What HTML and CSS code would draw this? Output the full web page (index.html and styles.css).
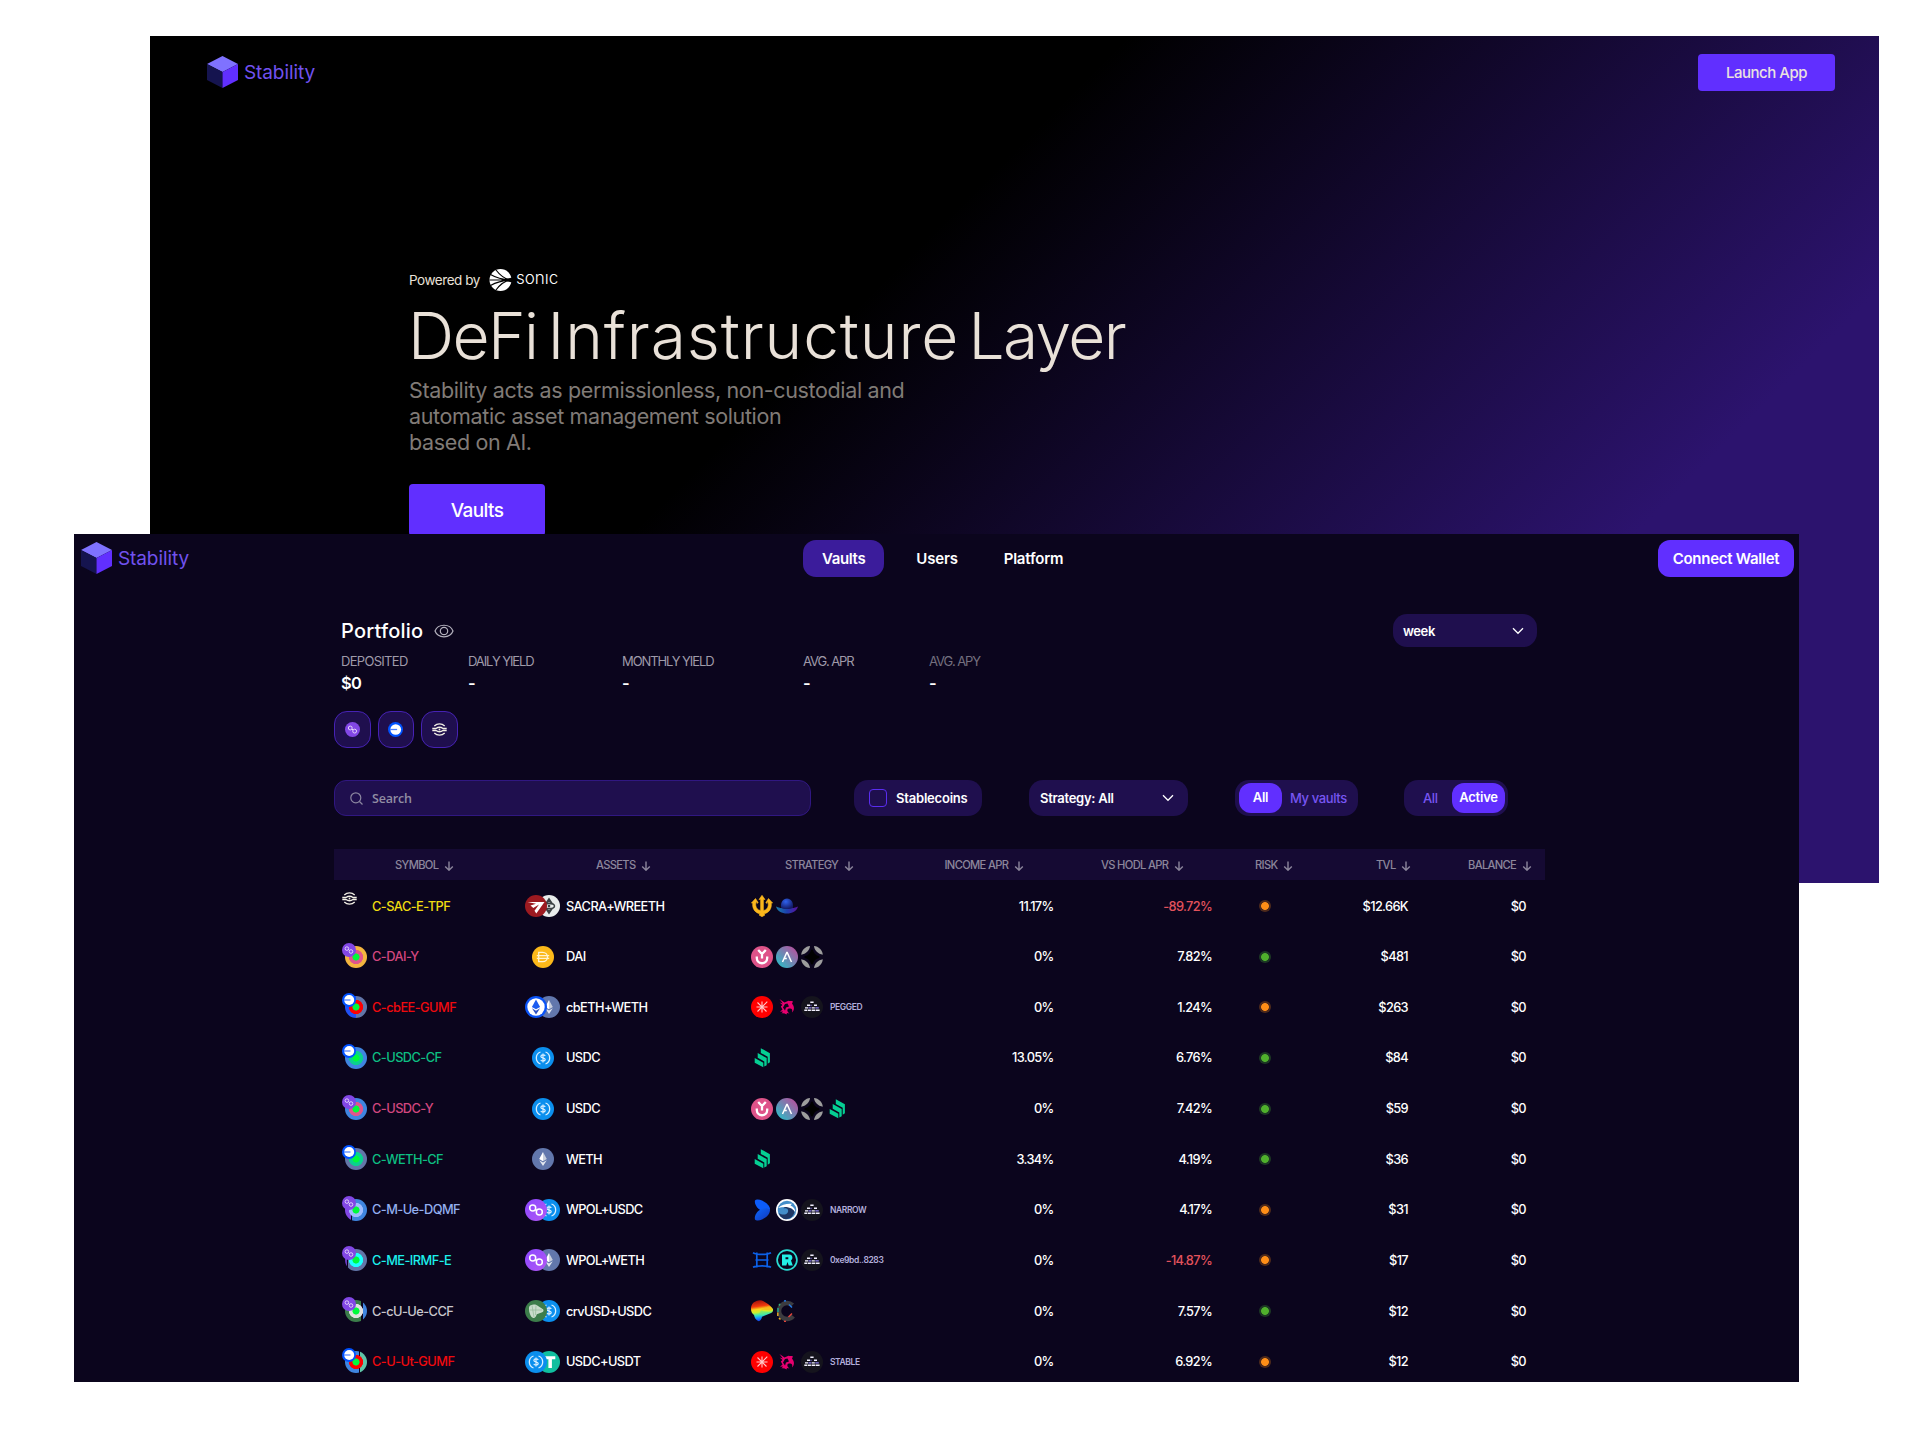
FILE: index.html
```html
<!DOCTYPE html>
<html lang="en">
<head>
<meta charset="utf-8">
<title>Stability</title>
<link rel="stylesheet" href="styles.css">
</head>
<body>
<svg class="sprite" aria-hidden="true">
  <defs>
    <linearGradient id="g-aave" x1="1" y1="0" x2="0" y2="1"><stop offset=".1" stop-color="#b6509e"/><stop offset=".9" stop-color="#2ebac6"/></linearGradient>
    <linearGradient id="g-hat" x1="0" y1="0" x2="1" y2="0"><stop offset="0" stop-color="#1a7fa8"/><stop offset=".5" stop-color="#1c3fae"/><stop offset="1" stop-color="#5a0f9c"/></linearGradient>
    <radialGradient id="g-hat2" cx=".4" cy=".3" r=".7"><stop offset="0" stop-color="#2f62ee"/><stop offset="1" stop-color="#131a66"/></radialGradient>
    <linearGradient id="g-wing" x1="0" y1="0" x2="1" y2="1"><stop offset="0" stop-color="#0c68ff"/><stop offset="1" stop-color="#1236b8"/></linearGradient>
    <linearGradient id="g-curve" x1=".35" y1="0" x2=".5" y2="1"><stop offset="0" stop-color="#a3100c"/><stop offset=".28" stop-color="#f23a0d"/><stop offset=".42" stop-color="#f9d71c"/><stop offset=".56" stop-color="#c8f22c"/><stop offset=".7" stop-color="#2fe6c0"/><stop offset=".85" stop-color="#1689ff"/><stop offset="1" stop-color="#1430d8"/></linearGradient>
    <linearGradient id="g-pol" x1="0" y1="0" x2="1" y2="1"><stop offset="0" stop-color="#8a46ff"/><stop offset="1" stop-color="#b358f5"/></linearGradient>
  </defs>
  <symbol id="cube" viewBox="0 0 31 32"><path fill="#7f72ff" d="M15.500 0 31 8 15.500 16 0 8z"/><path fill="#15144f" d="M0 8 15.500 16V32L0 24z"/><path fill="#612fff" d="M31 8 15.500 16V32L31 24z"/></symbol>
  <symbol id="chev" viewBox="0 0 12 8"><path d="M1 1.200 6 6.300 11 1.200" fill="none" stroke="#fff" stroke-width="1.300"/></symbol>
  <symbol id="down" viewBox="0 0 10 10"><path d="M5 .5V9M1.200 5.400 5 9.200 8.800 5.400" fill="none" stroke="#8c869c" stroke-width="1.400"/></symbol>
  <symbol id="pol" viewBox="0 0 14 14"><circle cx="7" cy="7" r="7" fill="#8247e5"/><g fill="none" stroke="#e6d9fb" stroke-width=".9"><circle cx="4.900" cy="5.600" r="1.800"/><circle cx="9" cy="8.500" r="1.800"/><path d="M6.500 6.500 7.500 7.500"/></g></symbol>
  <symbol id="base" viewBox="0 0 14 14"><circle cx="7" cy="7" r="7" fill="#0052ff"/><circle cx="7.200" cy="7" r="5" fill="#fff"/><path d="M2 7H8.500" stroke="#4a7dff" stroke-width="1.200"/></symbol>
  <symbol id="real" viewBox="0 0 15 13"><g fill="none" stroke="#f3f0e6" stroke-width="1.400"><path d="M2.300 2.900C5.300.2 9.700.2 12.700 2.900M2.300 10.100C5.300 12.800 9.700 12.800 12.700 10.100M.3 5.500H4C6 4 9 4 11 5.500H14.700M.3 7.500H4C6 9 9 9 11 7.500H14.700"/></g><circle cx="7.500" cy="6.500" r=".9" fill="#f3f0e6"/></symbol>
  <symbol id="usdc" viewBox="0 0 22 22"><circle cx="11" cy="11" r="11" fill="#0b8fee"/><path d="M8.500 5A6.400 6.400 0 0 0 8.500 17M13.500 5A6.400 6.400 0 0 1 13.500 17" fill="none" stroke="#d9efff" stroke-width="1.300"/><path d="M13.200 9C12.600 7.600 9 7.500 8.900 9.400 8.900 11.400 13.200 10.400 13.200 12.600 13.100 14.400 9.300 14.400 8.800 12.900M11 6.600V15.400" fill="none" stroke="#d9efff" stroke-width="1.200"/></symbol>
  <symbol id="weth" viewBox="0 0 22 22"><circle cx="11" cy="11" r="11" fill="#6277ac"/><path d="M11 4 7.200 11 11 13.300z" fill="#fff"/><path d="M11 4 14.800 11 11 13.300z" fill="#c9cfdd"/><path d="M7.200 12.200 11 18 14.800 12.200 11 14.500z" fill="#e4e8f0"/></symbol>
  <symbol id="cbeth" viewBox="0 0 22 22"><circle cx="11" cy="11" r="11" fill="#0a53f6"/><circle cx="11" cy="11" r="8.700" fill="#fff"/><path d="M11 3.500 6.900 11 11 13.300 15.100 11z" fill="#1b5cf0"/><path d="M6.900 12.300 11 18.500 15.100 12.300 11 14.700z" fill="#2f53c4"/></symbol>
  <symbol id="wpol" viewBox="0 0 22 22"><circle cx="11" cy="11" r="11" fill="url(#g-pol)"/><g fill="none" stroke="#fff" stroke-width="1.500"><circle cx="7.700" cy="9" r="3"/><circle cx="14.300" cy="13" r="3"/><path d="M10.200 10.400 11.800 11.600"/></g></symbol>
  <symbol id="dai" viewBox="0 0 22 22"><circle cx="11" cy="11" r="11" fill="#fcb91a"/><path d="M6.700 6.300H10.600C13.500 6.300 15.500 8.300 15.500 11S13.500 15.700 10.600 15.700H6.700zM4.800 9.700H17.200M4.800 12.300H17.200" fill="none" stroke="#fff3cf" stroke-width="1.300"/></symbol>
  <symbol id="sacra" viewBox="0 0 22 22"><circle cx="11" cy="11" r="11" fill="#9c1a20"/><path d="M2.500 7H19.500L11.300 18.500 9.500 15.700 14 9.600 8.300 13 5.500 10.500 11 8.800z" fill="#fff"/></symbol>
  <symbol id="wreeth" viewBox="0 0 22 22"><circle cx="11" cy="11" r="11" fill="#e9ecec"/><path d="M11 2.500 6.300 9.500 11 7.200 15.700 9.500zM11 19.500 6.300 12.500 11 14.800 15.700 12.500z" fill="#3b4144"/><ellipse cx="11" cy="11" rx="5.500" ry="2.600" fill="none" stroke="#3b4144" stroke-width="1.500"/><circle cx="11" cy="11" r="1.300" fill="#3b4144"/></symbol>
  <symbol id="crvusd" viewBox="0 0 22 22"><circle cx="11" cy="11" r="11" fill="#3c7d4a"/><path d="M4 7.500C4.500 4.500 9 4 11.500 5L18 9.200C19 10.200 18.500 11.800 17.200 12.300L11.800 14.200C11 17 9.500 18.600 7.800 17.800 5.500 17 3.600 11.500 4 7.500z" fill="#c9dccb"/><path d="M7 5.500 9 17M11 5.500 10.500 15M4.500 10H17" stroke="#8fb896" stroke-width=".7" fill="none"/></symbol>
  <symbol id="usdt" viewBox="0 0 22 22"><circle cx="11" cy="11" r="11" fill="#10bf9f"/><path d="M7 5.200H17.300V8.200H13.900V17H10.400V8.200H7z" fill="#fff"/></symbol>
  <symbol id="trident" viewBox="0 0 22 22"><path fill="#fbb71c" stroke="#fbb71c" stroke-width=".6" d="M11 .3 14 4.500H12.400V15.500C15.300 15.200 17 13 17.200 10.500 17.400 8.500 17 7.500 16.500 6.500L15.800 8.500 14.900 7.500 17.500 3.500 21.600 8 20.200 8.300C21 12.500 18.500 18 12.800 18.700L14 20 11 21.700 8 20 9.200 18.700C3.500 18 1 12.500 1.800 8.300L.4 8 4.500 3.500 7.100 7.500 6.200 8.500 5.500 6.500C5 7.500 4.600 8.500 4.800 10.500 5 13 6.700 15.200 9.600 15.500V4.500H8z"/></symbol>
  <symbol id="hat" viewBox="0 0 22 22"><path d="M0 11.500C4 14 18 14 22 11.500 21 16 16 18.500 11 18.500S1 16 0 11.500z" fill="url(#g-hat)"/><path d="M5 12.500C4.500 7 7 3.500 11 3.500S17.500 7 17 12.500C14 14.600 8 14.600 5 12.500z" fill="url(#g-hat2)"/></symbol>
  <symbol id="yearn" viewBox="0 0 22 22"><circle cx="11" cy="11" r="11" fill="#de5389"/><path d="M7.200 4 11 8 14.800 4M11 8V12.500M5.800 10.500V12C5.800 19 16.200 19 16.200 12V10.500" fill="none" stroke="#fff" stroke-width="2.300"/></symbol>
  <symbol id="aave" viewBox="0 0 22 22"><circle cx="11" cy="11" r="11" fill="url(#g-aave)"/><path d="M6.500 16 10.800 6.500H11.200L15.500 16M7.500 12.600H10.800" fill="none" stroke="#fff" stroke-width="1.500"/></symbol>
  <symbol id="morpho" viewBox="0 0 22 22"><path d="M11 3.800Q12 10 18.200 11 12 12 11 18.200 10 12 3.800 11 10 10 11 3.800z" fill="#000" stroke="#000" stroke-width="2"/><g fill="#9d9d9d"><path d="M9 0C8.500 4.500 5 8 .2 8.800.5 4 4.500.3 9 0z"/><path d="M13 0C13.500 4.500 17 8 21.800 8.800 21.500 4 17.500.3 13 0z"/><path d="M9 22C8.500 17.500 5 14 .2 13.200.5 18 4.500 21.700 9 22z"/><path d="M13 22C13.500 17.500 17 14 21.800 13.200 21.500 18 17.500 21.700 13 22z"/></g></symbol>
  <symbol id="gamma" viewBox="0 0 22 22"><circle cx="11" cy="11" r="11" fill="#fe0000"/><path d="M11 5.500V16.500M5.500 11H16.500M6.500 6.500 15.500 15.500M16.300 5.700 6.500 15.500" stroke="#ffc9c9" stroke-width="1.100"/></symbol>
  <symbol id="uni" viewBox="0 0 22 22"><path fill="#e8006f" d="M3.500 3 8.500 6.500 12.500 4.800C14 5.200 15.500 4.800 17 5.500L16 7.500C18.500 10.500 18.700 14 16 16.500 17 13 15.500 12 13 12.500 10.500 13 11 15.500 13.500 17.500L11 17 10.500 18.500C9 17.500 7 17 5.500 17.500L7 15.500 4 15.800 6.500 13.500 4.800 10.500 6.500 9 3.600 6.500 6.800 7.500z"/><path d="M9 8 7 11.500 9 14.500 10 11.500 13 10.500 11.500 7.500z" fill="#0b051d"/></symbol>
  <symbol id="alm" viewBox="0 0 22 22"><circle cx="11" cy="11" r="11" fill="#15141d"/><g fill="#f3f1ff"><path d="M9.300 5.500H12.600V7H9.300zM6 8.600H9V10H6zM13 8.600H16V10H13zM4 11.200H7V12.600H4zM10.800 11.200H13.800V12.600H10.800zM3.300 13.500H6.300V15H3.300zM6.900 13.500H9.900V15H6.900zM10.600 13.500H14V15H10.600zM14.600 13.500H18.600V15H14.600z"/></g><path fill="#8d7ff0" d="M9.500 8.800H10.500V10H9.500zM7.400 11.200H10.400V12.600H7.400zM14.300 11.200H17.800V12.600H14.300z"/></symbol>
  <symbol id="comp" viewBox="0 0 22 22"><path fill="#05cf93" d="M9.800 1.200 18.900 6.300V15.300L16.700 16.800V9.800L9.800 5.900zM6.700 6 15.700 11V18.200L13.300 19.600V14.500L6.700 10.700zM3.700 11 12.300 15.800V20.300L3.700 15.700z"/></symbol>
  <symbol id="defi" viewBox="0 0 22 22"><path fill="#0c5cfb" d="M4 1.500C5 .3 8 .2 11 1.500 16 3.700 19 7.500 19 10 19 12 15.500 12.700 12 12 7 11 3 5 4 1.500z"/><path fill="url(#g-wing)" d="M4 20.500C5 21.700 8 21.800 11 20.500 16 18.300 19 14.500 19 11 17 9 13.500 8.800 10 10.200 6 12 3 17 4 20.500z"/></symbol>
  <symbol id="quick" viewBox="0 0 22 22"><circle cx="11" cy="11" r="11" fill="#fff"/><circle cx="11" cy="11" r="9.300" fill="#438ec9"/><path d="M3 14C6 16.500 11 16 12 13 13 10 10 8.500 7.500 9.500 10 5.500 17 7 18.500 13 17 18.500 13 20.200 10 20.200 6.500 20 3.500 17.500 3 14z" fill="#1d3764"/><path d="M2 9C6 5.500 10 4.500 16 4.800L14.500 6.500C18 8 19.500 10.500 19.300 13.500 17 9.500 12 6.500 2 9z" fill="#fff"/></symbol>
  <symbol id="ichi" viewBox="0 0 22 22"><path d="M5.800 3.500V18.500M16.200 3.500V18.500M2 3.800C6 6 16 6 20 3.800M4.500 11H17.500M2 18.200C6 16.300 16 16.300 20 18.200" fill="none" stroke="#0c61e8" stroke-width="1.700"/></symbol>
  <symbol id="retro" viewBox="0 0 22 22"><circle cx="11" cy="11" r="9.900" fill="none" stroke="#2adcd2" stroke-width="1.700"/><path fill="#22f0e6" fill-rule="evenodd" d="M6 5.500H13.500C16.800 5.500 17.300 10 15 11.500L16.800 16.500H12.700L11.500 13 10.300 16.500H6zM9.500 8.300V10.200H12.300V8.300z"/></symbol>
  <symbol id="curve" viewBox="0 0 22 22"><path fill="url(#g-curve)" d="M0 9C0 3.500 4 .5 9 .3 13 .3 20 5.500 22 9 22.300 11 21.500 12.500 19.500 13.300L11 16.800C10.500 19.500 9 21.800 7 21 4.500 19.500 3.500 17.500 3 15 1 13.500 0 11.500 0 9z"/><path fill="#f7b21b" d="M10 9.500 18 6 21.500 9.500 19 10.500z" opacity=".7"/><path fill="#5be88a" d="M8 14 10 10.500 20 12.500 11 16z" opacity=".6"/></symbol>
  <symbol id="convex" viewBox="0 0 22 22"><circle cx="11" cy="11" r="8" fill="none" stroke="#3c3c40" stroke-width="4.500" stroke-dasharray="38 12.300" stroke-dashoffset="-5.500"/><path d="M2 8V12" stroke="#1fa18d" stroke-width="1.500"/><path d="M1.800 12.500V16" stroke="#e0a326" stroke-width="1.500"/><path d="M3 5.500 4 4" stroke="#34b27b" stroke-width="1.500"/><path d="M8 1 10 .8M13 4.500 16 7.500" stroke="#2277e0" stroke-width="1.500"/><path d="M12.500 17 16 13.500M8 21.300 10 21.500" stroke="#e2453c" stroke-width="1.500"/><path d="M3 18 4.500 19.500" stroke="#eea820" stroke-width="1.500"/></symbol>
</svg>

<section class="hero">
  <header class="hero-top">
    <div class="logo"><svg><use href="#cube"/></svg><span>Stability</span></div>
    <button class="launch">Launch App</button>
  </header>
  <div class="hero-body">
    <div class="powered"><span>Powered by</span>
      <svg class="sonic-mark" viewBox="0 0 22 22"><circle cx="11" cy="11" r="11" fill="#fff"/><path d="M22 11C16 10.500 11 7 6.500 1M22 11C14 10.700 7 9 1 5.500M22 11H0M22 11C14 11.300 7 13 1 16.500M22 11C16 11.500 11 15 6.500 21" fill="none" stroke="#000" stroke-width="1.200"/><path d="M22.500 8.500 12 11 22.500 13.500z"/></svg>
      <span class="sonic">sonıc</span></div>
    <h1><span class="narrow">DeFi</span> <span class="wide">Infrastructure</span> <span class="narrow">Layer</span></h1>
    <p>Stability acts as permissionless, non-custodial and<br>automatic asset management solution<br>based on AI.</p>
    <button class="cta">Vaults</button>
  </div>
</section>

<main class="app">
  <header class="app-top">
    <div class="logo"><svg><use href="#cube"/></svg><span>Stability</span></div>
    <nav><a class="on">Vaults</a><a>Users</a><a>Platform</a></nav>
    <button class="connect">Connect Wallet</button>
  </header>

  <section class="portfolio">
    <div class="title-row">
      <h2>Portfolio</h2>
      <svg class="eye" viewBox="0 0 20 14"><path d="M1 7C4-.7 16-.7 19 7 16 14.700 4 14.700 1 7z" fill="none" stroke="#b4b1bd" stroke-width="1.200"/><circle cx="10" cy="7" r="3.700" fill="none" stroke="#b4b1bd" stroke-width="1.200"/></svg>
      <div class="select week"><span>week</span><svg class="chev"><use href="#chev"/></svg></div>
    </div>
    <dl class="stats">
      <div><dt>DEPOSITED</dt><dd>$0</dd></div>
      <div><dt class="tight">DAILY YIELD</dt><dd>-</dd></div>
      <div><dt class="tight">MONTHLY YIELD</dt><dd>-</dd></div>
      <div><dt class="tight">AVG. APR</dt><dd>-</dd></div>
      <div><dt class="tight dim">AVG. APY</dt><dd>-</dd></div>
    </dl>
  </section>

  <div class="networks">
    <button><svg><use href="#pol"/></svg></button>
    <button><svg><use href="#base"/></svg></button>
    <button><svg><use href="#real"/></svg></button>
  </div>

  <div class="filters">
    <div class="search"><svg viewBox="0 0 13 13"><circle cx="5.800" cy="5.800" r="5" fill="none" stroke="#8b86a0" stroke-width="1.200"/><path d="M9.500 9.500 12.500 12.500" stroke="#8b86a0" stroke-width="1.200"/></svg><span>Search</span></div>
    <div class="stable"><i class="box"></i><span>Stablecoins</span></div>
    <div class="select strategy"><span>Strategy: All</span><svg class="chev"><use href="#chev"/></svg></div>
    <div class="toggle mine"><b>All</b><span>My vaults</span></div>
    <div class="toggle state"><span>All</span><b>Active</b></div>
  </div>

  <div class="table">
    <div class="thead">
      <span>SYMBOL<svg><use href="#down"/></svg></span><span>ASSETS<svg><use href="#down"/></svg></span><span>STRATEGY<svg><use href="#down"/></svg></span><span>INCOME APR<svg><use href="#down"/></svg></span><span>VS HODL APR<svg><use href="#down"/></svg></span><span>RISK<svg><use href="#down"/></svg></span><span>TVL<svg><use href="#down"/></svg></span><span>BALANCE<svg><use href="#down"/></svg></span>
    </div>

    <div class="row">
      <div class="sym yellow"><span class="ring none"><svg class="net real"><use href="#real"/></svg></span>C-SAC-E-TPF</div>
      <div class="assets"><span class="coins"><svg><use href="#sacra"/></svg><svg><use href="#wreeth"/></svg></span>SACRA+WREETH</div>
      <div class="strat"><svg><use href="#trident"/></svg><svg><use href="#hat"/></svg></div>
      <div class="num">11.17%</div><div class="num neg">-89.72%</div><div class="risk mid"></div><div class="num">$12.66K</div><div class="num">$0</div>
    </div>
    <div class="row">
      <div class="sym pink"><span class="ring r-dai"><svg class="net"><use href="#pol"/></svg></span>C-DAI-Y</div>
      <div class="assets"><span class="coins"><svg><use href="#dai"/></svg></span>DAI</div>
      <div class="strat"><svg><use href="#yearn"/></svg><svg><use href="#aave"/></svg><svg><use href="#morpho"/></svg></div>
      <div class="num">0%</div><div class="num">7.82%</div><div class="risk low"></div><div class="num">$481</div><div class="num">$0</div>
    </div>
    <div class="row">
      <div class="sym red"><span class="ring r-cbee"><svg class="net"><use href="#base"/></svg></span>C-cbEE-GUMF</div>
      <div class="assets"><span class="coins"><svg><use href="#cbeth"/></svg><svg><use href="#weth"/></svg></span>cbETH+WETH</div>
      <div class="strat"><svg><use href="#gamma"/></svg><svg><use href="#uni"/></svg><svg><use href="#alm"/></svg><em>PEGGED</em></div>
      <div class="num">0%</div><div class="num">1.24%</div><div class="risk mid"></div><div class="num">$263</div><div class="num">$0</div>
    </div>
    <div class="row">
      <div class="sym green"><span class="ring r-usdc-cf"><svg class="net"><use href="#base"/></svg></span>C-USDC-CF</div>
      <div class="assets"><span class="coins"><svg><use href="#usdc"/></svg></span>USDC</div>
      <div class="strat"><svg><use href="#comp"/></svg></div>
      <div class="num">13.05%</div><div class="num">6.76%</div><div class="risk low"></div><div class="num">$84</div><div class="num">$0</div>
    </div>
    <div class="row">
      <div class="sym pink"><span class="ring r-usdc-y"><svg class="net"><use href="#pol"/></svg></span>C-USDC-Y</div>
      <div class="assets"><span class="coins"><svg><use href="#usdc"/></svg></span>USDC</div>
      <div class="strat"><svg><use href="#yearn"/></svg><svg><use href="#aave"/></svg><svg><use href="#morpho"/></svg><svg><use href="#comp"/></svg></div>
      <div class="num">0%</div><div class="num">7.42%</div><div class="risk low"></div><div class="num">$59</div><div class="num">$0</div>
    </div>
    <div class="row">
      <div class="sym green"><span class="ring r-weth-cf"><svg class="net"><use href="#base"/></svg></span>C-WETH-CF</div>
      <div class="assets"><span class="coins"><svg><use href="#weth"/></svg></span>WETH</div>
      <div class="strat"><svg><use href="#comp"/></svg></div>
      <div class="num">3.34%</div><div class="num">4.19%</div><div class="risk low"></div><div class="num">$36</div><div class="num">$0</div>
    </div>
    <div class="row">
      <div class="sym blue"><span class="ring r-dqmf"><svg class="net"><use href="#pol"/></svg></span>C-M-Ue-DQMF</div>
      <div class="assets"><span class="coins"><svg><use href="#wpol"/></svg><svg><use href="#usdc"/></svg></span>WPOL+USDC</div>
      <div class="strat"><svg><use href="#defi"/></svg><svg><use href="#quick"/></svg><svg><use href="#alm"/></svg><em>NARROW</em></div>
      <div class="num">0%</div><div class="num">4.17%</div><div class="risk mid"></div><div class="num">$31</div><div class="num">$0</div>
    </div>
    <div class="row">
      <div class="sym cyan"><span class="ring r-irmf"><svg class="net"><use href="#pol"/></svg></span>C-ME-IRMF-E</div>
      <div class="assets"><span class="coins"><svg><use href="#wpol"/></svg><svg><use href="#weth"/></svg></span>WPOL+WETH</div>
      <div class="strat"><svg><use href="#ichi"/></svg><svg><use href="#retro"/></svg><svg><use href="#alm"/></svg><em>0xe9bd..8283</em></div>
      <div class="num">0%</div><div class="num neg">-14.87%</div><div class="risk mid"></div><div class="num">$17</div><div class="num">$0</div>
    </div>
    <div class="row">
      <div class="sym grey"><span class="ring r-ccf"><svg class="net"><use href="#pol"/></svg></span>C-cU-Ue-CCF</div>
      <div class="assets"><span class="coins"><svg><use href="#crvusd"/></svg><svg><use href="#usdc"/></svg></span>crvUSD+USDC</div>
      <div class="strat"><svg><use href="#curve"/></svg><svg><use href="#convex"/></svg></div>
      <div class="num">0%</div><div class="num">7.57%</div><div class="risk low"></div><div class="num">$12</div><div class="num">$0</div>
    </div>
    <div class="row">
      <div class="sym red"><span class="ring r-ut"><svg class="net"><use href="#base"/></svg></span>C-U-Ut-GUMF</div>
      <div class="assets"><span class="coins"><svg><use href="#usdc"/></svg><svg><use href="#usdt"/></svg></span>USDC+USDT</div>
      <div class="strat"><svg><use href="#gamma"/></svg><svg><use href="#uni"/></svg><svg><use href="#alm"/></svg><em>STABLE</em></div>
      <div class="num">0%</div><div class="num">6.92%</div><div class="risk mid"></div><div class="num">$12</div><div class="num">$0</div>
    </div>
  </div>
</main>
</body>
</html>
```
FILE: styles.css
```css
* { box-sizing: border-box; }
body {
  position: relative;
  margin: 0;
  width: 1920px;
  height: 1440px;
  overflow: hidden;
  background: #fff;
  color: #fff;
  font-family: Inter, "Liberation Sans", sans-serif;
}
h1, h2, p, dl, dd { margin: 0; }
svg { display: block; flex: none; }
.sprite { position: absolute; width: 0; height: 0; }
button {
  border: 0;
  padding: 0;
  font: inherit;
  color: inherit;
  display: flex;
  align-items: center;
  justify-content: center;
}

/* Landing window */
.hero {
  position: absolute;
  left: 150px;
  top: 36px;
  width: 1729px;
  height: 847px;
  background: linear-gradient(135deg, #000 38%, #2c136e 77%);
}
.hero-top {
  display: flex;
  justify-content: space-between;
  align-items: flex-start;
  height: 228px;
  padding: 18px 44px 0 57px;
}
.logo {
  display: flex;
  align-items: center;
  gap: 6px;
  height: 37px;
  font-size: 19px;
  letter-spacing: -.1px;
  color: #7152ef;
}
.logo svg { width: 31px; height: 32px; margin-top: -1px; }
.launch {
  width: 137px;
  height: 37px;
  border-radius: 4px;
  background: #612fff;
  color: #ebe2e0;
  font-size: 15px;
  font-weight: 500;
  letter-spacing: -.5px;
}
.hero-body { padding-left: 259px; }
.powered {
  display: flex;
  align-items: center;
  height: 32px;
  font-size: 13.5px;
  letter-spacing: -.45px;
  color: #e9e1d8;
}
.sonic-mark { width: 23px; height: 22px; margin: 0 4px 0 9px; }
.sonic { font-size: 17px; font-weight: 300; letter-spacing: 0; line-height: 20px; padding-bottom: 4px; color: #fff; }
h1 {
  margin-top: 2px;
  font-size: 64px;
  font-weight: 300;
  line-height: 76px;
  letter-spacing: -.77px;
  word-spacing: -7px;
  white-space: nowrap;
  color: #e9e1d8;
}
.narrow { margin-left: -1px; letter-spacing: -1.600px; }
.wide { letter-spacing: .9px; }
.hero p {
  margin-top: 3px;
  font-size: 21.5px;
  line-height: 26px;
  letter-spacing: -.36px;
  color: #807b77;
}
.cta {
  width: 136px;
  height: 52px;
  margin-top: 29px;
  border-radius: 4px;
  background: #612fff;
  font-size: 19px;
  font-weight: 500;
  letter-spacing: -.6px;
}

/* Dashboard window */
.app {
  position: absolute;
  left: 74px;
  top: 534px;
  width: 1725px;
  height: 847.5px;
  background: #0b051d;
  overflow: hidden;
}
.app-top {
  display: grid;
  grid-template-columns: 722px 1fr 136px;
  padding: 6px 5px 0 7px;
  height: 43px;
}
nav { display: flex; gap: 14px; font-size: 15px; font-weight: 600; letter-spacing: -.35px; }
nav a { display: flex; align-items: center; height: 37px; padding: 0 19px; border-radius: 13px; }
nav a + a { padding: 0 14px 0 18px; letter-spacing: -.2px; }
nav .on { background: #3b1c9b; }
.connect {
  height: 37px;
  border-radius: 12px;
  background: #612fff;
  font-size: 15px;
  font-weight: 600;
  letter-spacing: -.26px;
}
.portfolio { padding: 37px 0 0 267px; }
.title-row { display: flex; align-items: center; height: 33px; width: 1196px; }
h2 { width: 93px; font-size: 20px; font-weight: 500; letter-spacing: .2px; line-height: 24px; }
.eye { width: 20px; height: 14px; }
.select {
  display: flex;
  align-items: center;
  justify-content: space-between;
  background: #1f0f4e;
  border-radius: 14px;
  font-size: 13px;
  font-weight: 600;
  letter-spacing: -.27px;
}
.week { width: 144px; height: 33px; margin-left: auto; padding: 0 13px 0 10px; letter-spacing: -.4px; }
.chev { width: 12px; height: 8px; }
.stats { display: grid; grid-template-columns: 127px 154px 181px 126px 126px; margin-top: 4px; }
.stats dt { font-size: 13px; line-height: 20px; letter-spacing: -.7px; color: #9f9aa9; white-space: nowrap; }
.stats .tight { letter-spacing: -1.1px; }
.stats .dim { color: #74707f; }
.stats dd { font-size: 16.500px; line-height: 25px; font-weight: 600; letter-spacing: -.8px; }
.networks { display: flex; gap: 7px; margin-top: 15px; padding-left: 260px; }
.networks button { width: 36.500px; height: 37px; border: 1px solid #4622b4; border-radius: 13px; background: #1f0f4e; }
.networks svg { width: 15px; height: 15px; }

.filters { display: flex; height: 36px; margin: 32px 0 33px 260px; font-size: 13px; font-weight: 600; letter-spacing: -.2px; }
.filters > div { height: 36px; display: flex; align-items: center; background: #1f0f4e; border-radius: 14px; }
.filters .search {
  width: 477px;
  padding-left: 15px;
  gap: 9px;
  border: 1px solid #301781;
  border-radius: 12px;
  font: 600 12.500px "Open Sans", sans-serif;
  letter-spacing: -.2px;
  color: #918da3;
}
.search svg { width: 13px; height: 13px; }
.stable { width: 128px; margin-left: 43px; padding-left: 15px; gap: 9px; }
.box { width: 18px; height: 18px; border: 1px solid #5a2df0; border-radius: 4px; }
.strategy { width: 159px; margin-left: 47px; padding: 0 14px 0 11px; }
.toggle b {
  display: flex;
  align-items: center;
  justify-content: center;
  height: 30px;
  border-radius: 12px;
  background: #612fff;
  font-weight: 600;
  padding-bottom: 2px;
}
.toggle span { font-weight: 500; color: #7756f2; letter-spacing: -.38px; }
.mine { width: 123px; margin-left: 47px; padding-left: 4px; gap: 8px; }
.mine b { width: 43px; }
.state { width: 104px; margin-left: 46px; padding: 0 3px 0 19px; justify-content: space-between; }
.state b { width: 53px; }

/* Vault table */
.table { width: 1211px; margin-left: 260px; }
.thead {
  display: grid;
  grid-template-columns: 201px 189px 159.500px 156.500px 154px 121px 92px 76px;
  align-items: center;
  height: 31px;
  padding-left: 61px;
  background: #150a33;
  color: #8c869c;
  font-size: 11.200px;
  font-weight: 500;
  letter-spacing: -.68px;
}
.thead span { display: flex; align-items: center; gap: 5.500px; white-space: nowrap; }
.thead svg { width: 10px; height: 10px; margin-top: 2px; }
.thead + .row { margin-top: .7px; }
.row {
  display: grid;
  grid-template-columns: 190.500px 225.500px 170px 133.600px 158.400px 106px 90px 118px;
  align-items: center;
  height: 50.630px;
}
.sym, .assets { display: flex; align-items: center; font-size: 12.800px; font-weight: 500; letter-spacing: -.55px; white-space: nowrap; }
.assets { letter-spacing: -.6px; }
.sym { gap: 5.500px; padding-left: 10.500px; }
.ring {
  position: relative;
  width: 22px;
  height: 22px;
  border-radius: 50%;
  background:
    radial-gradient(circle, #00fa3c 3.200px, transparent 3.900px),
    radial-gradient(circle, var(--in) 6.800px, transparent 7.400px),
    var(--out, linear-gradient(90deg, var(--l) 50%, var(--r) 50%));
}
.none { background: none; }
.net { position: absolute; left: -3px; top: -3px; width: 14px; height: 14px; }
.real { width: 15px; height: 13px; left: -3px; top: -3px; }
.r-dai { --in: #e0558c; --l: #f4b53f; --r: #f4b53f; }
.r-cbee { --in: #fe0000; --l: #2151f5; --r: #6275a8; }
.r-usdc-cf { --in: #0bd08f; --l: #3f85e0; --r: #3f85e0; }
.r-usdc-y { --in: #e0558c; --l: #3f85e0; --r: #3f85e0; }
.r-weth-cf { --in: #0bd08f; --l: #6275a8; --r: #6275a8; }
.r-dqmf { --in: #9fbcff; --out: linear-gradient(90deg, #8247e5 28%, #0b051d 28% 33%, #3f85e0 33%); }
.r-irmf { --in: #1effff; --out: linear-gradient(90deg, #6a3cc0 8%, #0b051d 8% 14%, #6275a8 14%); }
.r-ccf { --in: #e0e0e0; --out: linear-gradient(90deg, #3b7d4a 74%, #0b051d 74% 80%, #3f85e0 80%); }
.r-ut { --in: #fe0000; --out: linear-gradient(90deg, #3f85e0 64%, #0b051d 64% 70%, #5fc4a8 70%); }
.yellow { color: #f0dc10; }
.pink { color: #d2477f; }
.red { color: #f00a0e; }
.green { color: #0dbf82; }
.blue { color: #93aff0; }
.cyan { color: #1cf0ec; }
.grey { color: #c9c7cd; }
.coins { display: flex; justify-content: center; width: 36px; margin-right: 5.500px; }
.assets .coins svg { width: 22px; height: 22px; }
.coins svg:first-child { position: relative; z-index: 1; }
.coins svg + svg { margin-left: -9px; }
.strat { display: flex; align-items: center; gap: 3.300px; padding-left: .5px; }
.strat svg { width: 22px; height: 22px; }
.strat em { margin-left: 3.500px; font: 600 8.500px Inter, sans-serif; letter-spacing: -.38px; color: #b3afdc; white-space: nowrap; }
.num { text-align: right; font-size: 12.800px; font-weight: 550; letter-spacing: -.65px; }
.neg { color: #e2525c; }
.risk { justify-self: center; width: 12px; height: 12px; border-radius: 50%; }
.low { background: radial-gradient(circle, #4fb02c 3.500px, #1c3824 4.300px); }
.mid { background: radial-gradient(circle, #ff8e17 3.500px, #4e2a1b 4.300px); }
```
